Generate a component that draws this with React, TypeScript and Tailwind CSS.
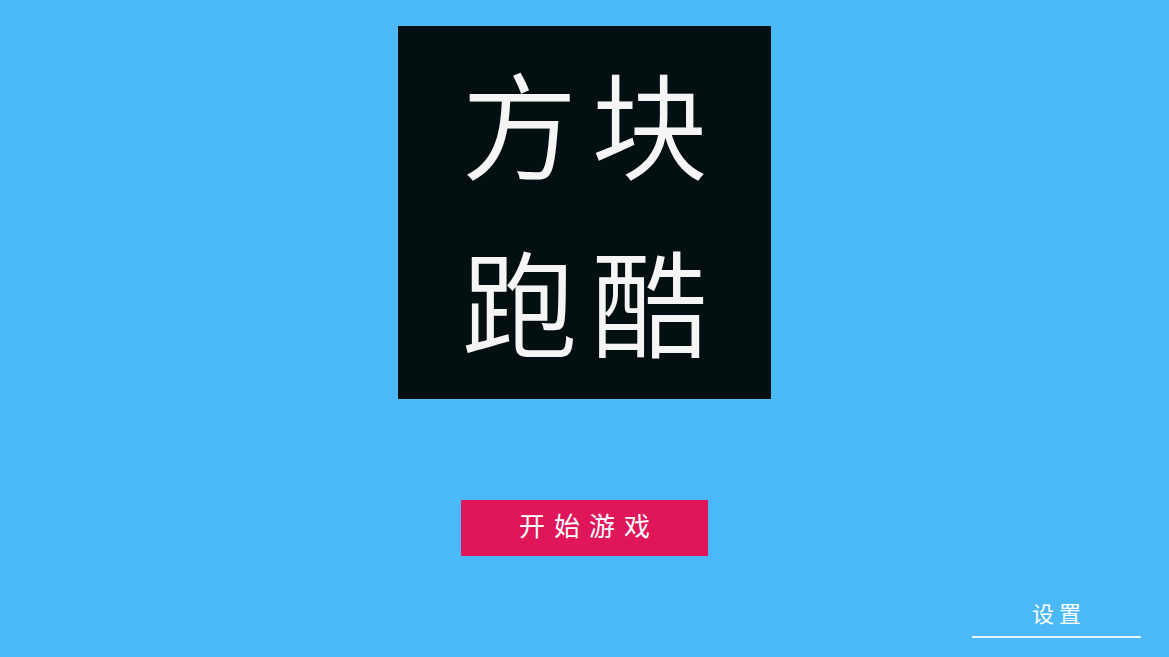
import React from "react";

export default function App() {
  return (
    <div
      className="w-full h-[657px] bg-[#4bb9f8] flex flex-col items-center overflow-hidden"
      style={{ fontFamily: '"Noto Sans CJK SC", "Noto Sans", sans-serif' }}
    >
      <div className="mt-[26px] w-[373px] h-[373px] bg-[#030f10] flex flex-col items-center justify-center pb-[8px] text-[#f5f5f5] font-[350]">
        <div className="text-[116px] leading-[178px] tracking-[14px] pl-[14px]">方块</div>
        <div className="text-[116px] leading-[178px] tracking-[14px] pl-[14px]">跑酷</div>
      </div>
      <div className="mt-[101px] w-[247px] h-[56px] bg-[#e0165a] flex items-center justify-center pb-[7px] text-white text-[26px] tracking-[9px] pl-[9px]">
        开始游戏
      </div>
      <div className="mt-auto w-full flex justify-end pr-[28px] pb-[19px]">
        <div className="w-[169px] flex flex-col items-center">
          <div className="text-white text-[22px] leading-[30px] tracking-[5px] pl-[5px]">设置</div>
          <div className="mt-[9px] w-full h-[2px] bg-[#eaf6ff]" />
        </div>
      </div>
    </div>
  );
}
